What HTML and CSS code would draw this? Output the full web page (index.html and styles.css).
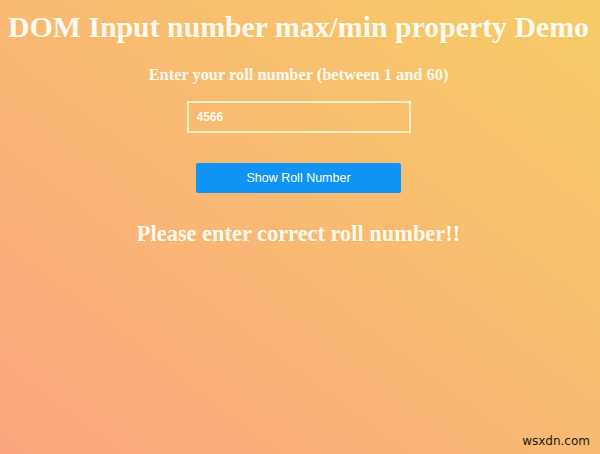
FILE: index.html
```html
<!DOCTYPE html>
<html>
<head>
<meta charset="utf-8">
<link rel="stylesheet" href="styles.css">
</head>
<body>
<main class="page">
  <h1 class="title">DOM Input number max/min property Demo</h1>
  <h4 class="label">Enter your roll number (between 1 and 60)</h4>
  <input class="roll" type="text" value="4566">
  <button class="show">Show Roll Number</button>
  <h2 class="result">Please enter correct roll number!!</h2>
  <div class="mark">wsxdn.com</div>
</main>
</body>
</html>
```
FILE: styles.css
```css
html, body {
  margin: 0;
  height: 100%;
}
body {
  background: linear-gradient(to top right, #fba67e 0%, #f6cc67 100%);
  font-family: "Liberation Serif", "Times New Roman", serif;
  color: #fffaee;
}
.page {
  height: 100%;
  box-sizing: border-box;
  padding-right: 3px;
  display: flex;
  flex-direction: column;
  align-items: center;
  position: relative;
}
.title {
  font-size: 29.8px;
  font-weight: bold;
  margin: 10px 0 0;
  line-height: 34px;
  white-space: nowrap;
}
.label {
  font-size: 16.4px;
  margin: 22px 0 0;
  line-height: 18px;
}
.roll {
  margin: 17px 0 0;
  width: 224px;
  height: 32px;
  box-sizing: border-box;
  border: 2px solid #fdf1cb;
  background: transparent;
  color: #fffaee;
  font-family: "Liberation Sans", Arial, sans-serif;
  font-weight: bold;
  font-size: 12px;
  padding: 0 8px;
  outline: none;
}
.show {
  margin: 30px 0 0;
  width: 205px;
  height: 30px;
  background: #0f93f5;
  border: none;
  border-radius: 2px;
  color: #ffffff;
  font-family: "Liberation Sans", Arial, sans-serif;
  font-size: 12.5px;
}
.result {
  font-size: 22.4px;
  font-weight: bold;
  margin: 28px 0 0;
  line-height: 26px;
}
.mark {
  position: absolute;
  right: 10px;
  bottom: 6px;
  color: #1a1a1a;
  font-family: "DejaVu Sans", sans-serif;
  font-size: 12px;
}
```
